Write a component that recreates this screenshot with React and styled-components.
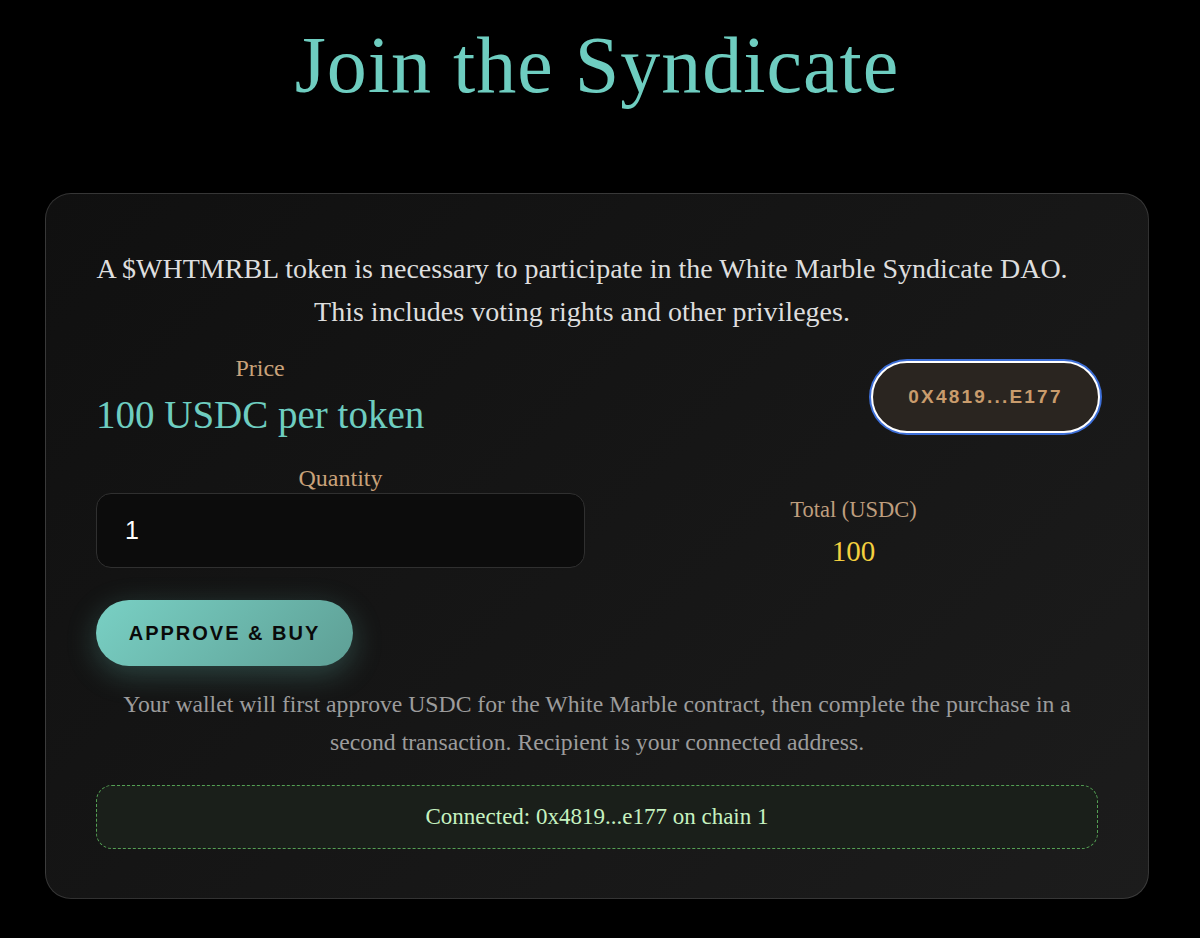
import React, { useState } from 'react';
import styled, { createGlobalStyle } from 'styled-components';

const GlobalStyle = createGlobalStyle`
  html, body {
    margin: 0;
    padding: 0;
    background: #000;
  }
  body {
    font-family: "Liberation Serif", "Times New Roman", serif;
    color: #ddd;
  }
`;

const Page = styled.main`
  min-height: 938px;
  padding: 21px 51px 40px 45px;
  box-sizing: border-box;
`;

const Title = styled.h1`
  margin: 0;
  text-align: center;
  font-size: 80px;
  font-weight: 400;
  color: #6ecdc0;
  letter-spacing: 1px;
  line-height: 88px;
`;

const Card = styled.section`
  margin-top: 84px;
  padding: 53px 50px 49px;
  border: 1px solid rgba(255, 255, 255, 0.14);
  border-radius: 26px;
  background: linear-gradient(135deg, #101010 0%, #1c1c1c 100%);
  box-shadow: 0 10px 40px rgba(0, 0, 0, 0.6);
`;

const Intro = styled.p`
  margin: 0;
  padding-right: 30px;
  text-align: center;
  font-size: 28px;
  line-height: 43px;
  color: #dedede;
`;

const TopRow = styled.div`
  margin-top: 20px;
  display: flex;
  align-items: center;
  justify-content: space-between;
`;

const Stat = styled.div`
  display: flex;
  flex-direction: column;
  align-items: center;
`;

const Label = styled.span`
  font-size: ${({ small }) => (small ? '22.5px' : '24px')};
  color: ${({ small }) => (small ? '#bf9e7e' : '#c9a27a')};
  line-height: 30px;
`;

const PriceValue = styled.span`
  margin-top: 6px;
  font-size: 39px;
  color: #6ecdc0;
  line-height: 52px;
`;

const TotalValue = styled.span`
  margin-top: 9px;
  font-size: 29px;
  color: #f4d03f;
  line-height: 34px;
`;

const WalletButton = styled.button`
  margin-right: -2px;
  width: 229px;
  height: 72px;
  border-radius: 36px;
  border: 2px solid #fff;
  box-shadow: 0 0 0 2px #3d6fd8;
  background: #2a2520;
  color: #c99c6c;
  font-family: "Liberation Sans", Arial, sans-serif;
  font-size: 19px;
  font-weight: 700;
  letter-spacing: 2.2px;
  cursor: pointer;
`;

const FormGrid = styled.div`
  margin-top: 22px;
  display: grid;
  grid-template-columns: 1fr 1fr;
  column-gap: 24px;
  align-items: end;
`;

const Field = styled.label`
  display: flex;
  flex-direction: column;
  align-items: center;
`;

const QtyInput = styled.input`
  width: 100%;
  height: 75px;
  box-sizing: border-box;
  padding: 0 28px;
  border: 1px solid #303030;
  border-radius: 15px;
  background: #0c0c0c;
  color: #fff;
  font-family: "Liberation Sans", Arial, sans-serif;
  font-size: 25px;
  outline: none;
`;

const BuyButton = styled.button`
  margin-top: 32px;
  width: 257px;
  height: 66px;
  border: none;
  border-radius: 33px;
  background: linear-gradient(135deg, #79d0c4 0%, #5e9f95 100%);
  box-shadow: 0 8px 30px rgba(110, 205, 192, 0.28);
  color: #0a0a0a;
  font-family: "Liberation Sans", Arial, sans-serif;
  font-size: 20px;
  font-weight: 700;
  letter-spacing: 2px;
  cursor: pointer;
`;

const Note = styled.p`
  margin: 19px 0 0;
  text-align: center;
  font-size: 23.7px;
  line-height: 38px;
  color: #9c9c9c;
`;

const Status = styled.div`
  margin-top: 24px;
  height: 64px;
  display: flex;
  align-items: center;
  justify-content: center;
  box-sizing: border-box;
  border: 1px dashed #54a054;
  border-radius: 16px;
  background: #1a1f1a;
  color: #c6f2c0;
  font-size: 23px;
`;

export default function App() {
  const [qty, setQty] = useState('1');
  const total = (Number(qty) || 0) * 100;

  return (
    <>
      <GlobalStyle />
      <Page>
        <Title>Join the Syndicate</Title>
        <Card>
          <Intro>
            A $WHTMRBL token is necessary to participate in the White Marble
            Syndicate DAO.
            <br />
            This includes voting rights and other privileges.
          </Intro>
          <TopRow>
            <Stat>
              <Label>Price</Label>
              <PriceValue>100 USDC per token</PriceValue>
            </Stat>
            <WalletButton>0X4819...E177</WalletButton>
          </TopRow>
          <FormGrid>
            <Field>
              <Label>Quantity</Label>
              <QtyInput
                value={qty}
                onChange={(e) => setQty(e.target.value)}
              />
            </Field>
            <Stat>
              <Label small>Total (USDC)</Label>
              <TotalValue>{total}</TotalValue>
            </Stat>
          </FormGrid>
          <BuyButton>APPROVE &amp; BUY</BuyButton>
          <Note>
            Your wallet will first approve USDC for the White Marble contract,
            then complete the purchase in a
            <br />
            second transaction. Recipient is your connected address.
          </Note>
          <Status>Connected: 0x4819...e177 on chain 1</Status>
        </Card>
      </Page>
    </>
  );
}
